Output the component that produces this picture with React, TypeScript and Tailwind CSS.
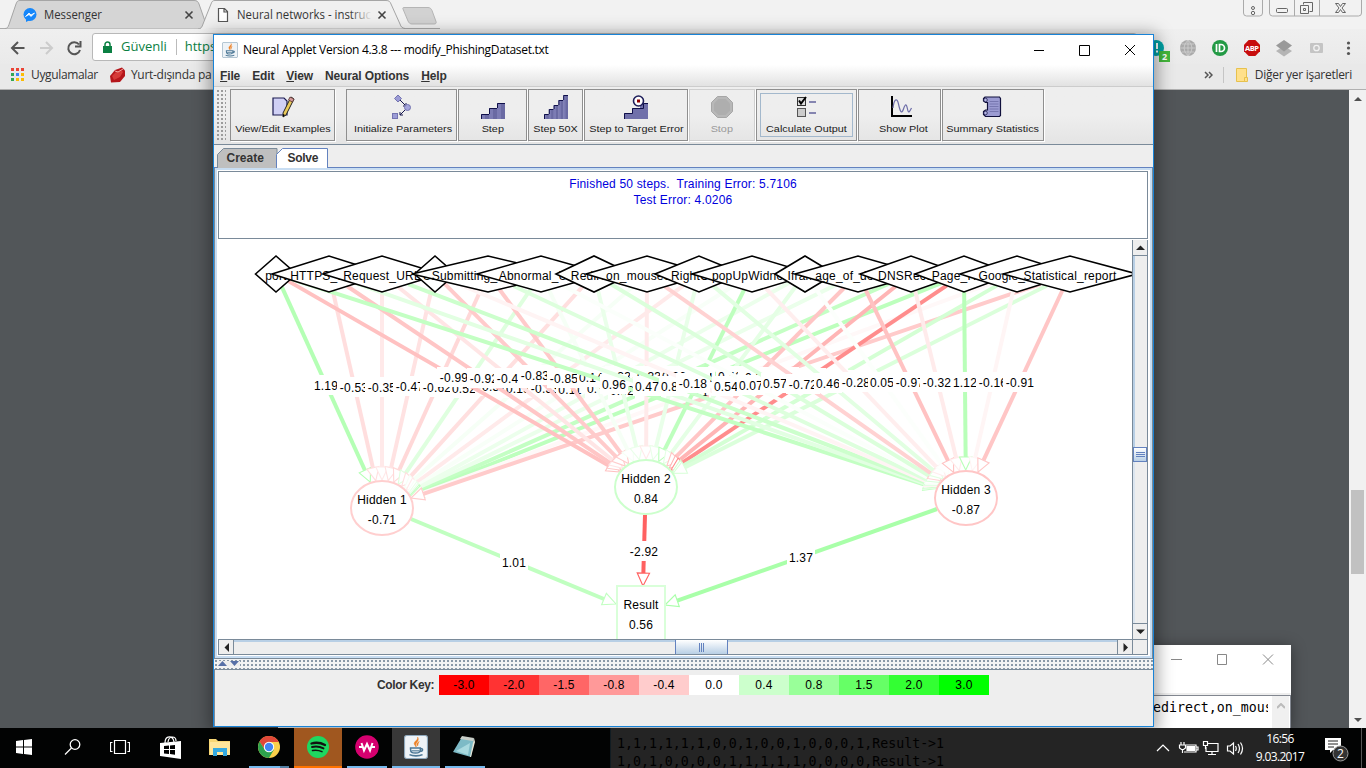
import React from "react";

type Point = { x: number; y: number };
type InputNode = { label: string; x: number; hw: number };

const INPUTS: InputNode[] = [
  { label: "port", x: 276, hw: 20.5 },
  { label: "HTTPS_token", x: 329, hw: 57 },
  { label: "Request_URL", x: 382, hw: 59 },
  { label: "URL", x: 435, hw: 20.5 },
  { label: "Submitting_to_email", x: 488, hw: 76 },
  { label: "Abnormal_URL", x: 541, hw: 64 },
  { label: "Redirect", x: 594, hw: 38 },
  { label: "on_mouseover", x: 647, hw: 61 },
  { label: "RightClick", x: 699, hw: 44 },
  { label: "popUpWidnow", x: 752, hw: 60 },
  { label: "Iframe", x: 805, hw: 30 },
  { label: "age_of_domain", x: 858, hw: 63 },
  { label: "DNSRecord", x: 911, hw: 51 },
  { label: "Page_Rank", x: 964, hw: 49 },
  { label: "Google_Index", x: 1017, hw: 57 },
  { label: "Statistical_report", x: 1070, hw: 67 },
];

const HIDDEN = [
  {
    label: "Hidden 1", value: "-0.71", x: 382, y: 508, color: "#ffcfcf",
    weights: [1.19, -0.53, -0.35, -0.47, -0.62, 0.52, -0.51, 0.15, -0.33, 0.11, 0.31, 0.32, 0.95, 1.05, -0.11, -0.84],
  },
  {
    label: "Hidden 2", value: "0.84", x: 646, y: 487, color: "#ccffcc",
    weights: [-0.99, -0.92, -0.41, -0.83, -0.85, 0.14, 0.33, -0.33, 0.36, 1.04, 0.42, -0.93, -1.18, -1.83, 0.69, 0.58],
  },
  {
    label: "Hidden 3", value: "-0.87", x: 966, y: 498, color: "#ffc6c6",
    weights: [0.96, 0.47, 0.82, -0.18, 0.54, 0.07, 0.57, -0.72, 0.46, -0.28, 0.05, -0.97, -0.32, 1.12, -0.16, -0.91],
  },
];

function tint(w: number): string {
  const c = Math.round(255 * (1 - Math.min(0.62, Math.abs(w) * 0.245)));
  return w < 0 ? `rgb(255,${c},${c})` : `rgb(${c},255,${c})`;
}

function Edge({ a, b, w, drop = 0 }: { a: Point; b: Point; w: number; drop?: number }) {
  const dx = b.x - a.x;
  const dy = b.y - a.y;
  const len = Math.hypot(dx, dy);
  const ux = dx / len;
  const uy = dy / len;
  const bx = b.x - ux * 13;
  const by = b.y - uy * 13;
  const color = tint(w);
  const text = w.toFixed(2);
  const tw = w < 0 ? 34 : 28;
  const mx = Math.round((a.x + b.x) / 2);
  const my = Math.round((a.y + b.y) / 2) + drop;
  return (
    <g>
      <line x1={a.x} y1={a.y} x2={bx} y2={by} stroke={color} strokeWidth={4} />
      <polygon
        points={`${b.x},${b.y} ${bx - uy * 6.2},${by + ux * 6.2} ${bx + uy * 6.2},${by - ux * 6.2}`}
        fill="white" stroke={color} strokeWidth={1.1}
      />
      <rect x={mx - tw / 2} y={my - 10} width={tw} height={20} fill="white" />
      <text x={mx} y={my + 5} textAnchor="middle">{text}</text>
    </g>
  );
}

function Network() {
  return (
    <svg width="914" height="399" viewBox="218 240 914 399" className="block shrink-0 bg-white font-['Liberation_Sans',sans-serif] text-[12px] tracking-[0.2px]">
      {HIDDEN.map((h) => h.weights.map((w, i) => {
        const n = INPUTS[i];
        const dx = h.x - n.x;
        const dy = h.y - 274;
        const s = 1 / (Math.abs(dx) / n.hw + Math.abs(dy) / 18);
        const e = 1 / Math.hypot(dx / 31, dy / 28);
        const drop = Math.abs(dx) < 200 ? 1 : 0;
        return <Edge key={h.label + i} w={w} drop={drop} a={{ x: n.x + dx * s, y: 274 + dy * s }} b={{ x: h.x - dx * e, y: h.y - dy * e }} />;
      }))}
      <Edge a={{ x: 411, y: 519 }} b={{ x: 616, y: 604 }} w={1.01} />
      <Edge a={{ x: 645, y: 515 }} b={{ x: 643, y: 586 }} w={-2.92} />
      <Edge a={{ x: 937, y: 509 }} b={{ x: 665, y: 605 }} w={1.37} />
      {INPUTS.map((n) => (
        <g key={n.label}>
          <polygon points={`${n.x - n.hw},274 ${n.x},256 ${n.x + n.hw},274 ${n.x},292`} fill="white" stroke="black" strokeWidth={1.6} />
          <text x={n.x} y={280} textAnchor="middle">{n.label}</text>
        </g>
      ))}
      {HIDDEN.map((h) => (
        <g key={h.label}>
          <ellipse cx={h.x} cy={h.y} rx={31} ry={27} fill="white" stroke={h.color} strokeWidth={2} />
          <text x={h.x} y={h.y - 4} textAnchor="middle">{h.label}</text>
          <text x={h.x} y={h.y + 16} textAnchor="middle">{h.value}</text>
        </g>
      ))}
      <rect x={617} y={586} width={48} height={60} fill="white" stroke="#d9ffd9" strokeWidth={2} />
      <text x={641} y={609} textAnchor="middle">Result</text>
      <text x={641} y={629} textAnchor="middle">0.56</text>
    </svg>
  );
}

function JavaIcon({ size }: { size: number }) {
  return (
    <svg width={size} height={size} viewBox="0 0 22 22">
      <rect x="0.5" y="0.5" width="21" height="21" rx="2" fill="#eef3f7" stroke="#8fa9bd" />
      <path d="M12.5 2c1 2.500-4 4-3 6.500.3.900 1.300 1.500 1.500 2.500 1-1-1-2 .2-3.500C12.200 6 14 4.500 12.500 2zM14 6c-2 1-3 2.500-1.500 4 .5-1.500.2-2.500 1.500-4z" fill="#ee7f22" stroke="#ee7f22" strokeWidth=".5" />
      <path d="M6 12h9v1c0 3-1.500 3.500-4.500 3.500S6 16 6 13zM15 12.500c3-.5 2.500 2.500-.5 2.500M5 18c3 1.500 9 1.500 12 0" fill="none" stroke="#4d7896" strokeWidth="1.400" />
      <path d="M7 14.500h7" stroke="#4d7896" />
    </svg>
  );
}

function StairIcon({ steps, h }: { steps: number; h: number }) {
  const w = 24 / steps;
  return (
    <svg width="24" height="24" viewBox="0 0 24 24">
      {Array.from({ length: steps }, (_, i) => {
        const bh = Math.round((h * (i + 1)) / steps);
        return (
          <g key={i}>
            <rect x={i * w} y={24 - bh} width={w + 0.3} height={bh} fill="#7c7cb4" />
            <rect x={i * w + w / 2} y={24 - bh} width={w / 2} height={bh} fill="#6a6aa3" />
            <path d={`M${i * w + 0.5} ${24 - Math.round((h * i) / steps)}V${24.5 - bh}H${(i + 1) * w}`} stroke="#10104a" fill="none" />
          </g>
        );
      })}
    </svg>
  );
}

const examplesIcon = (
  <svg width="24" height="24" viewBox="0 0 24 24">
    <path d="M2 3h11l3 3v14H2z" fill="#d0d0f5" stroke="#1a1a50" strokeWidth="1.200" />
    <path d="M20 2l3 2-8 16-3 2v-4z" fill="#e9c95a" stroke="#222" />
    <path d="M19 2l4 2-1.500 3-4-2z" fill="#d49a9a" stroke="#533" strokeWidth=".8" />
    <path d="M12 22v-3l2 1z" fill="#000" />
  </svg>
);
const initIcon = (
  <svg width="24" height="24" viewBox="0 0 24 24">
    <path d="M7 4l7 7M15 13l-7 7M14 8v3h-3M8 17v3h3" fill="none" stroke="#15154d" />
    <path d="M6 0l3.500 3.500L6 7 2.500 3.500z" fill="#9c9cd6" stroke="#7474b0" />
    <circle cx="15.500" cy="12.500" r="3" fill="#a5a5dc" stroke="#7474b0" />
    <rect x=".5" y="18.500" width="5" height="5" fill="#9c9cd6" stroke="#7474b0" />
  </svg>
);
const targetIcon = (
  <svg width="24" height="24" viewBox="0 0 24 24">
    <path d="M0 24v-6h8v-5h8V8h8v16z" fill="#7070aa" />
    <path d="M.5 24v-5.500h8v-5h11V8.500H24" fill="none" stroke="#10104a" />
    <circle cx="14.500" cy="6" r="5" fill="#fff" stroke="#1e1e5a" strokeWidth="1.600" />
    <rect x="13" y="4.500" width="3" height="3" fill="#8b0000" />
  </svg>
);
const stopIcon = (
  <svg width="24" height="24" viewBox="0 0 24 24">
    <path d="M7.500 1.500h9l6 6v9l-6 6h-9l-6-6v-9z" fill="#b8b8b8" stroke="#a6a6a6" />
    <path d="M8.500 4h7l4.500 4.500v7L15.500 20h-7L4 15.500v-7z" fill="#aeaeae" />
  </svg>
);
const calcIcon = (
  <svg width="24" height="24" viewBox="0 0 24 24">
    <rect x="2.500" y="2.500" width="8" height="8" fill="#ddd" stroke="#333" />
    <rect x="2.500" y="13.500" width="8" height="8" fill="#ccc" stroke="#555" />
    <path d="M4 5.500l2 3 5-6.500" fill="none" stroke="#000" strokeWidth="2" />
    <path d="M14 7h7M14 18h7" stroke="#63639c" strokeWidth="1.600" />
  </svg>
);
const plotIcon = (
  <svg width="24" height="24" viewBox="0 0 24 24">
    <path d="M1 1v20H21" fill="none" stroke="#000" strokeWidth="2" />
    <path d="M2 13C3 4 6 2 7.500 9s3 11 5 5 3-5 4 0 2 3 4-1" fill="none" stroke="#6d6da8" strokeWidth="1.200" />
  </svg>
);
const statsIcon = (
  <svg width="24" height="24" viewBox="0 0 24 24">
    <path d="M4 2h14.500l1 1.500V20.500l-1 1H4.500l-2-2v-3l2-1.500h2V7.500h-2L2.500 6V3.500z" fill="#9b9bd2" stroke="#10103c" strokeWidth="1.200" />
    <path d="M8.500 6.500h9M8.500 9h9M8.500 11.500h9M8.500 14h9M8.500 16.500h9" stroke="#7777b0" />
    <circle cx="4.500" cy="5" r="1.800" fill="#b5b5e5" stroke="#10103c" strokeWidth=".7" />
    <circle cx="4.500" cy="18" r="1.800" fill="#b5b5e5" stroke="#10103c" strokeWidth=".7" />
  </svg>
);

function Tool({ label, icon, className, disabled, focused }: { label: string; icon: React.ReactNode; className: string; disabled?: boolean; focused?: boolean }) {
  return (
    <div className={`h-[52px] shrink-0 border p-[3px] shadow-[1px_1px_0_#fff] ${disabled ? "border-[#cfcfcf]" : "border-[#8f8f8f]"} ${className}`}>
      <div className={`flex h-full flex-col items-center border ${focused ? "border-[#a3b8cc]" : "border-transparent"}`}>
        <div className="mt-px h-[25px]">{icon}</div>
        <span className={`mt-[3px] scale-x-[1.14] whitespace-nowrap text-[9.5px] leading-[14px] ${disabled ? "text-[#9a9a9a]" : "text-[#222]"}`}>{label}</span>
      </div>
    </div>
  );
}

const KEYS = [
  ["-3.0", "bg-[#ff0000]"], ["-2.0", "bg-[#ff3333]"], ["-1.5", "bg-[#ff6666]"], ["-0.8", "bg-[#ff9999]"], ["-0.4", "bg-[#ffcccc]"],
  ["0.0", "bg-white"], ["0.4", "bg-[#ccffcc]"], ["0.8", "bg-[#99ff99]"], ["1.5", "bg-[#66ff66]"], ["2.0", "bg-[#33ff33]"], ["3.0", "bg-[#00ff00]"],
];

function Arrow({ d }: { d: string }) {
  return <svg width="9" height="9" viewBox="0 0 9 9"><path d={d} fill="#222" /></svg>;
}

function Applet() {
  return (
    <div className="absolute left-[213px] top-[34px] flex h-[693px] w-[941px] flex-col border border-[#1883d7] bg-[#eee] font-['Liberation_Sans',sans-serif] text-[12px] text-black shadow-[0_3px_16px_3px_rgba(0,0,0,0.38)]">
      <div className="flex h-[30px] shrink-0 items-center bg-white pl-[8px]">
        <JavaIcon size={16} />
        <span className="ml-[5px] whitespace-nowrap pb-px font-['Open_Sans','Noto_Sans',sans-serif] text-[12px] tracking-[-0.3px]">Neural Applet Version 4.3.8 --- modify_PhishingDataset.txt</span>
        <svg className="mb-px ml-auto mr-[17px]" width="102" height="12" viewBox="0 0 102 12" fill="none" stroke="#000">
          <path d="M0 6.500h10M45.500 1.500h10v10h-10zM91 1l10 10M101 1L91 11" />
        </svg>
      </div>
      <div className="flex h-[22px] shrink-0 items-center gap-[12px] border-b border-[#ccc] bg-gradient-to-b from-white to-[#e2e2e2] pl-[6px] font-bold tracking-[-0.13px] text-[#333]">
        <span><u>F</u>ile</span><span>Edit</span><span><u>V</u>iew</span><span>Neural Options</span><span><u>H</u>elp</span>
      </div>
      <div className="flex h-[58px] shrink-0 items-start border-b border-[#7a8a99] bg-gradient-to-b from-[#eee] via-[#eee] to-[#e4e4e4] pl-[2px] pt-[2px]">
        <div className="mr-[4px] h-[52px] w-[10px] shrink-0 bg-[radial-gradient(#999_0.7px,transparent_1px)] bg-[size:4px_4px]" />
        <Tool className="w-[105px] pl-[4px]" label="View/Edit Examples" icon={examplesIcon} />
        <div className="w-[11px] shrink-0" />
        <Tool className="mr-px w-[111px] pl-[7px]" label="Initialize Parameters" icon={initIcon} />
        <Tool className="mr-px w-[69px]" label="Step" icon={<StairIcon steps={3} h={16} />} />
        <Tool className="mr-px w-[55px]" label="Step 50X" icon={<StairIcon steps={5} h={24} />} />
        <Tool className="mr-px w-[104px]" label="Step to Target Error" icon={targetIcon} />
        <Tool className="mr-px w-[66px]" disabled label="Stop" icon={stopIcon} />
        <Tool className="mr-px w-[101px]" focused label="Calculate Output" icon={calcIcon} />
        <Tool className="mr-px w-[83px] pl-[10px]" label="Show Plot" icon={plotIcon} />
        <Tool className="w-[102px]" label="Summary Statistics" icon={statsIcon} />
      </div>
      <div className="flex h-[23px] shrink-0 items-end border-b border-[#6382bf] pl-[3px] font-bold text-[#333]">
        <svg width="111" height="20" viewBox="0 0 111 20" className="-mb-px block font-bold">
          <path d="M.5 20V6.500l6-6H60V20" fill="#bfbfbf" stroke="#7a8a99" />
          <path d="M59.500 20V6.500l6-6H110.500V20" fill="#fff" stroke="#6382bf" />
          <text x="9.500" y="14" fill="#333">Create</text>
          <text x="70.500" y="14" fill="#333" letterSpacing="-0.3">Solve</text>
        </svg>
      </div>
      <div className="flex min-h-0 flex-1 flex-col border-x border-b border-[#7a8a99]">
        <div className="flex min-h-0 flex-1 flex-col border-2 border-[#c8ddf2] bg-white pl-px pr-[2px]">
          <div className="mt-px h-[68px] shrink-0 border border-[#7a8a99] bg-white pt-[4px] text-center leading-[16px] text-[#0000dd]">
            <p className="tracking-[0.18px]">Finished 50 steps.&nbsp; Training Error: 5.7106</p>
            <p className="tracking-[0.2px]">Test Error: 4.0206</p>
          </div>
          <div className="mt-px flex h-[399px] shrink-0">
            <Network />
            <div className="flex w-[16px] shrink-0 flex-col border-x border-[#7a8a99] bg-[#eee]">
              <div className="flex h-4 items-center justify-center border-b border-[#7a8a99]"><Arrow d="M0 7l4.500-4.500L9 7z" /></div>
              <div className="flex-1 border-l-2 border-[#b8cfe5]" />
              <div className="flex h-[15px] items-center justify-center border border-[#6382bf] bg-gradient-to-b from-white to-[#b8cfe5]">
                <svg width="9" height="7"><path d="M0 1.500h9M0 3.500h9M0 5.500h9" stroke="#6382bf" /></svg>
              </div>
              <div className="h-[161px] border-l-2 border-[#dbe5ef]" />
              <div className="flex h-4 items-center justify-center border-t border-[#7a8a99]"><Arrow d="M0 2.500l4.500 4.500L9 2.500z" /></div>
            </div>
          </div>
          <div className="flex h-4 shrink-0 border border-[#7a8a99] bg-[#eee]">
            <div className="flex w-[15px] items-center justify-center border-r border-[#7a8a99]"><Arrow d="M7 0L2.500 4.500 7 9z" /></div>
            <div className="w-[441px] border-t-2 border-[#b8cfe5]" />
            <div className="flex w-[53px] items-center justify-center border-x border-[#6382bf] bg-gradient-to-b from-white to-[#b8cfe5]">
              <svg width="7" height="9"><path d="M1.500 0v9M3.500 0v9M5.500 0v9" stroke="#6382bf" /></svg>
            </div>
            <div className="flex-1 border-t-2 border-[#b8cfe5]" />
            <div className="flex w-4 items-center justify-center border-x border-[#7a8a99]"><Arrow d="M2.500 0l4.500 4.500-4.500 4.500z" /></div>
            <div className="w-[14px]" />
          </div>
        </div>
      </div>
      <div className="flex h-[11px] shrink-0 items-center border-b border-[#7a8a99] bg-[#f3f3f3] bg-[radial-gradient(#8796a5_0.7px,transparent_1px)] bg-[size:4px_4px] pl-[4px]">
        <svg width="22" height="5" className="mb-px bg-[#eee]"><path d="M0 5l4.500-5L9 5zM12 0h9l-4.500 5z" fill="#5871a8" /></svg>
      </div>
      <div className="flex h-[56px] shrink-0 items-start border-l border-[#7a8a99] pl-[162px] pt-[5px]">
        <span className="w-[62px] whitespace-nowrap font-bold leading-[21px] tracking-[-0.35px] text-[#333]">Color Key:</span>
        {KEYS.map(([t, c]) => <div key={t} className={`h-5 w-[50px] text-center leading-[21px] tracking-[0.2px] ${c}`}>{t}</div>)}
      </div>
    </div>
  );
}

function Browser() {
  return (
    <div className="flex min-h-0 flex-1 flex-col font-['Open_Sans','Noto_Sans',sans-serif] text-[12px] text-[#333]">
      <div className="flex h-[29px] shrink-0 bg-[#f2f2f2]">
        <svg width="440" height="29" viewBox="0 0 440 29" className="shrink-0 font-['Open_Sans','Noto_Sans',sans-serif] text-[12px]">
          <defs>
            <linearGradient id="fade" gradientUnits="userSpaceOnUse" x1="350" x2="372" y1="0" y2="0"><stop stopColor="#333" /><stop offset="1" stopColor="#333" stopOpacity="0" /></linearGradient>
          </defs>
          <path d="M0 28.500H440" stroke="#aaa" />
          <path d="M5 28.500c2 0 3-1 4-4L16 4c1-3 2-3.500 4-3.500H194c3 0 4 1 5 3.500l7 20c1 3 2 4 4 4.500" fill="#d5d5d5" stroke="#a5a5a5" />
          <path d="M198 29c3 0 4-2 5-5L211 4c1-3 2-3.500 4-3.500H386c3 0 4 1 5 3.500l9 20c1 3 2 4 5 4.500" fill="#f0f0f0" stroke="#a5a5a5" />
          <path d="M404 7.500h24c2 0 3 1 4 3l4 11c.5 1.500 0 2.500-2 2.500h-22c-2 0-3-1-4-3l-5-12c-.4-1 0-1.500 1-1.500z" fill="#d2d2d2" stroke="#b5b5b5" />
          <circle cx="30" cy="14.500" r="6.500" fill="#1687fa" /><path d="M26 19v3l4-2z" fill="#1687fa" />
          <path d="M25.500 16.500l3.500-3.500 2 2 3.500-2-3.500 3.500-2-2z" fill="#fff" stroke="#fff" strokeWidth=".8" />
          <text x="44" y="19" fill="#333" textLength="58" lengthAdjust="spacingAndGlyphs">Messenger</text>
          <path d="M185.500 11.500l7 7M192.500 11.500l-7 7M378.500 11.500l7 7M385.500 11.500l-7 7" stroke="#444" strokeWidth="1.600" />
          <path d="M218.500 8.500h6l3 3v10h-9zM224 8.500v3.500h3.500" fill="#fff" stroke="#555" strokeWidth="1.200" />
          <text x="237" y="19" fill="url(#fade)" textLength="134" lengthAdjust="spacingAndGlyphs">Neural networks - instruc</text>
        </svg>
        <svg width="126" height="18" viewBox="1240 0 126 18" className="ml-auto" fill="none" stroke="#aaa">
          <path d="M1243.500 0v13q0 3 3 3h13q3 0 3-3V0M1269.500 0v13q0 3 3 3h86q3 0 3-3V0M1294.500 0v16M1319.500 0v16" />
          <g stroke="#666"><rect x="1276.500" y="8.500" width="11" height="4" rx="1" /><circle cx="1253" cy="8" r="1.500" /><circle cx="1253" cy="13" r="1.700" /><path d="M1303.500 4.500v-2h9v9h-3M1300.500 5.500h8v8h-8zM1303.500 8.500h2v2h-2zM1335.500 3.500h3l2 3 2-3h3l-3.500 4.500 3.500 4.500h-3l-2-3-2 3h-3l3.500-4.500z" /></g>
        </svg>
      </div>
      <div className="flex h-[35px] shrink-0 items-center bg-gradient-to-b from-[#efefef] to-[#eaeaea]">
        <svg width="92" height="34" viewBox="0 29 92 34" fill="none" strokeWidth="2">
          <path d="M24.500 47H12M18 41l-6 6 6 6" stroke="#555" /><path d="M40 47h12M46 41l6 6-6 6" stroke="#ccc" />
          <path d="M79 43.500A6 6 0 1 0 80 49M80.500 40v5.500H75" stroke="#555" />
        </svg>
        <div className="flex h-[28px] w-[1045px] items-center rounded-[3px] border border-[#b8b8b8] bg-white pl-[10px] text-[13px] text-[#0b8043]">
          <svg width="9" height="12" className="mr-[9px]"><path d="M0 5h9v7H0z" fill="#0b8043" /><path d="M2 6V3.500a2.500 2.500 0 0 1 5 0V6" fill="none" stroke="#0b8043" strokeWidth="1.500" /></svg>
          Güvenli<span className="ml-[9px] mr-[8px] h-4 w-px bg-[#bbb]" />https
        </div>
        <svg width="229" height="34" viewBox="1137 29 229 34">
          <circle cx="1156" cy="47" r="8" fill="#00a2a5" /><path d="M1157 42v6M1157 49.500v2" stroke="#fff" strokeWidth="2" />
          <rect x="1159" y="50" width="11" height="11" fill="#44b83c" /><text x="1162" y="59" fontSize="9" fontWeight="700" fill="#fff">2</text>
          <circle cx="1188" cy="47" r="8" fill="#aaa" /><path d="M1180 47h16M1188 39v16M1182 43h12M1182 51h12M1188 39q-8 8 0 16q8-8 0-16" stroke="#d0d0d0" fill="none" strokeWidth=".8" />
          <circle cx="1220" cy="47" r="8" fill="#239a45" /><path d="M1216.500 43v8M1219.500 43.500h1.500a3.500 3.500 0 0 1 0 7h-1.500z" stroke="#fff" strokeWidth="1.700" fill="none" />
          <path d="M1248.700 39h6.600l4.700 4.700v6.600l-4.700 4.700h-6.600l-4.700-4.700v-6.600z" fill="#c70d0d" /><text x="1245" y="50" fontSize="7.500" fontWeight="700" fill="#fff" textLength="14">ABP</text>
          <path d="M1276 50l8-5 8 5-8 5.500z" fill="#b5b5b5" /><path d="M1276 44.500l8-5.500 8 5.500-8 6z" fill="#999" />
          <rect x="1310" y="42" width="13" height="10" rx="1" fill="#c4c4c4" /><circle cx="1316.500" cy="47" r="2.700" fill="none" stroke="#f2f2f2" strokeWidth="1.300" />
          <g fill="#555"><circle cx="1348.500" cy="42" r="1.600" /><circle cx="1348.500" cy="47" r="1.600" /><circle cx="1348.500" cy="52.500" r="1.600" /></g>
        </svg>
      </div>
      <div className="flex h-[26px] shrink-0 items-center border-b border-[#b0b0b0] bg-[#e9e9e9] pb-[4px] pl-[11px]">
        <svg width="13" height="13" viewBox="0 0 13 13">
          {["#ea4335", "#ea4335", "#ea4335", "#34a853", "#4285f4", "#fbbc05", "#34a853", "#fbbc05", "#fbbc05"].map((c, i) => <rect key={i} x={(i % 3) * 5} y={Math.floor(i / 3) * 5} width="3" height="3" fill={c} />)}
        </svg>
        <span className="ml-[7px] tracking-[-0.35px]">Uygulamalar</span>
        <svg className="ml-[11px]" width="17" height="16" viewBox="0 0 17 16"><path d="M1 9L6 3l7-2.500 3 3V9l-5 6-9 .5z" fill="#b5161b" /><path d="M3 9l4-4 5-2 2 2-3 5-6 3z" fill="#d63a38" /><path d="M6 4l3 1 5-3" stroke="#f0a19c" fill="none" /></svg>
        <span className="ml-[5px] whitespace-nowrap tracking-[-0.28px]">Yurt-dışında pa</span>
        <svg className="ml-auto" width="9" height="8"><path d="M1 1l3 3-3 3M5 1l3 3-3 3" fill="none" stroke="#555" strokeWidth="1.500" /></svg>
        <span className="ml-[10px] mr-[12px] h-4 w-px bg-[#c5c5c5]" />
        <svg width="12" height="14"><path d="M.5.5h10v13H.5z" fill="#ffe08a" stroke="#e7c14d" /><path d="M8.500 9.500h3v4h-3z" fill="#ffe08a" stroke="#e7c14d" /></svg>
        <span className="ml-[7px] mr-[14px] whitespace-nowrap tracking-[-0.28px]">Diğer yer işaretleri</span>
      </div>
      <div className="flex min-h-0 flex-1 justify-end bg-[#525659]">
        <div className="flex w-[17px] flex-col items-center bg-[#f1f1f1]">
          <div className="flex h-[17px] items-center"><svg width="8" height="4"><path d="M0 4l4-4 4 4z" fill="#505050" /></svg></div>
          <div className="mt-[383px] h-[84px] w-[13px] bg-[#c1c1c1]" />
          <div className="mt-auto flex h-[17px] items-center"><svg width="8" height="4"><path d="M0 0l4 4 4-4z" fill="#505050" /></svg></div>
        </div>
      </div>
    </div>
  );
}

function Notepad() {
  return (
    <div className="absolute left-[278px] top-[645px] flex h-[83px] w-[1013px] flex-col bg-white shadow-[0_2px_14px_rgba(0,0,0,0.4)]">
      <div className="flex h-[48px] shrink-0 justify-end pr-[17px] pt-[9px]">
        <svg width="103" height="12" fill="none" stroke="#888"><path d="M0 5.500h11M46.500.500h9v10h-9zM92 .500l10 10M102 .500l-10 10" /></svg>
      </div>
      <div className="h-[2px] shrink-0 bg-[#eee]" />
      <div className="flex flex-1 border-r border-t border-[#828790]">
        <div className="w-[990px] overflow-hidden whitespace-nowrap pl-[875px] font-['DejaVu_Sans_Mono',monospace] text-[13.25px] leading-[24px] text-black">edirect,on_mous</div>
        <div className="ml-[4px] flex w-[17px] justify-center bg-[#f0f0f0] pt-[7px]"><svg width="8" height="6"><path d="M0 5l4-4 4 4" fill="none" stroke="#bbb" strokeWidth="2" /></svg></div>
      </div>
    </div>
  );
}

function TaskItem({ className, children, bar }: { className: string; children: React.ReactNode; bar?: string }) {
  return (
    <div className={`flex h-10 shrink-0 flex-col items-center ${className}`}>
      <div className="flex flex-1 items-center">{children}</div>
      <div className={`h-[2px] w-full ${bar ?? "bg-transparent"}`} />
    </div>
  );
}

function Taskbar() {
  return (
    <div className="relative h-10 shrink-0 bg-[#020303] font-['Open_Sans','Noto_Sans',sans-serif] text-white">
      <div className="absolute left-[610px] top-0 h-10 w-[680px] overflow-hidden border-l border-[#111c22] bg-[#242424] pl-[6px] pt-[7px] font-['DejaVu_Sans_Mono',monospace] text-[13.25px] leading-[18px] text-black">
        <p>1,1,1,1,1,1,0,0,1,0,0,1,0,0,0,1,Result-&gt;1</p>
        <p>1,0,1,0,0,0,0,1,1,1,1,1,0,0,0,0,Result-&gt;1</p>
      </div>
      <div className="relative flex h-10">
        <TaskItem className="w-12"><svg width="16" height="16"><path d="M0 2l7-1v6.500H0zM8 .9L16 0v7.500H8zM0 8.500h7V15l-7-1zM8 8.500h8V16l-8-1z" fill="#fff" /></svg></TaskItem>
        <TaskItem className="w-12"><svg width="17" height="16" fill="none" stroke="#fff" strokeWidth="1.300"><circle cx="11" cy="5.500" r="4.800" /><path d="M7.500 9L1 15.500" /></svg></TaskItem>
        <TaskItem className="w-12"><svg width="20" height="16" fill="none" stroke="#fff" strokeWidth="1.200"><path d="M4.500 1.500h11v13h-11zM2.500 3.500h-2v9h2M17.500 3.500h2v9h-2" /></svg></TaskItem>
        <TaskItem className="w-[53px]"><svg width="22" height="24" viewBox="0 0 22 24"><path d="M0 8l21-2v18L0 21z" fill="#fff" /><path d="M5 8c0-8 8-8 9-1M8 7c1-7 8-6 8-1" fill="none" stroke="#fff" strokeWidth="1.200" /><path d="M4 11l5-.5V14H4zM10 10.400l5-.4v4h-5zM4 15h5v4l-5-.6zM10 15h5v4.700L10 19z" fill="#000" /></svg></TaskItem>
        <TaskItem className="w-[46px]"><svg width="22" height="19" viewBox="0 0 22 19"><path d="M0 1h7l2 2h12v14H0z" fill="#f8d775" /><path d="M1 4h20v13H1z" fill="#ffe69b" /><path d="M4 18v-8h14v8h-4v-4H8v4z" fill="#35a9e0" /></svg></TaskItem>
        <div className="w-[6px]" />
        <TaskItem className="w-[40px]" bar="bg-gradient-to-r from-[#76b9ed] from-78% to-[#527fa3] to-78%"><svg width="22" height="22" viewBox="-11 -11 22 22"><circle r="11" fill="#fbd04b" /><path d="M-9.500-5.500A11 11 0 0 1 9.800-5H0L-4 3z" fill="#e04839" /><path d="M-9.500-5.500A11 11 0 0 0 0 11L5 2.500-4 3z" fill="#2da14d" /><circle r="5.200" fill="#fff" /><circle r="4.200" fill="#4285f4" /></svg></TaskItem>
        <div className="w-[5px]" />
        <TaskItem className="w-12 bg-[#a0571f]" bar="bg-[#ff7200]"><svg width="22" height="22" fill="none" stroke="#111" strokeLinecap="round"><circle cx="11" cy="11" r="11" fill="#1ed760" stroke="none" /><path d="M4.500 7.500q7-2 13.500 1.500" strokeWidth="2.300" /><path d="M5 11q6-1.500 11.500 1.400" strokeWidth="1.900" /><path d="M5.500 14.500q5-1 9.500 1.200" strokeWidth="1.500" /></svg></TaskItem>
        <div className="w-[5px]" />
        <TaskItem className="w-10" bar="bg-[#76b9ed]"><svg width="24" height="24"><circle cx="12" cy="12" r="11.800" fill="#d6006f" /><path d="M6.500 8l2.500 7.500L12 9l3 6.500L17.500 8M4 12h4M16 12h4" fill="none" stroke="#fff" strokeWidth="2" /></svg></TaskItem>
        <div className="w-[5px]" />
        <TaskItem className="w-12 bg-[#383838]" bar="bg-[#76b9ed]"><JavaIcon size={24} /></TaskItem>
        <div className="w-[5px]" />
        <TaskItem className="w-10" bar="bg-[#76b9ed]"><svg width="24" height="22" className="mr-[3px]"><path d="M10 1l12 2-3 18L1 16z" fill="#7dbac6" /><path d="M10 0l12 2-1 3-13-2z" fill="#c9cfc9" /><path d="M22 2l1 4-4 15h-1z" fill="#e8e6d8" /><path d="M4 15L18 7l-2 12z" fill="#a9d9df" /></svg></TaskItem>
        <div className="ml-auto flex h-10 items-center">
          <svg width="88" height="20" fill="none" stroke="#fff" strokeWidth="1.200">
            <path d="M1 13l6-6 6 6M28 7h12v7H28M40.500 9h1.500v3h-1.500M25 4v3M28 4v3M23.500 7h6v3l-2 1.500h-2L23.500 10zM26.500 12v3" /><path d="M31 8.500h7.500v4H31z" fill="#fff" />
            <path d="M51 5.500h11v8H50V9M56 13.500V16M52 16.500h8M47.500 3.500h4v4h-4zM49.500 8v3" />
            <path d="M71.500 8v5H74l3.500 3V5L74 8zM79.500 8q1.500 2.500 0 5M82 6q3 4.500 0 9M84.500 4.500q4 6 0 12" />
          </svg>
          <div className="ml-[5px] w-[62px] text-center text-[12px] leading-[18px] tracking-[-0.65px]"><p>16:56</p><p>9.03.2017</p></div>
          <svg width="26" height="30" viewBox="0 0 26 30" className="ml-[14px]"><path d="M0 5h16v12H8l-3 3v-3H0z" fill="#fff" /><path d="M3 8h10M3 11h10M3 14h6" stroke="#222" /><circle cx="15.500" cy="20.500" r="7.500" fill="#333" stroke="#999" /><text x="15.500" y="25" textAnchor="middle" fill="#fff" fontSize="12">2</text></svg>
          <div className="ml-[10px] mr-[4px] h-10 w-px bg-[#555]" />
        </div>
      </div>
    </div>
  );
}

export default function App() {
  return (
    <div className="relative flex h-[768px] w-[1366px] flex-col overflow-hidden">
      <div className="relative flex h-[728px] shrink-0 flex-col overflow-hidden">
        <Browser />
        <Notepad />
        <Applet />
      </div>
      <Taskbar />
    </div>
  );
}
